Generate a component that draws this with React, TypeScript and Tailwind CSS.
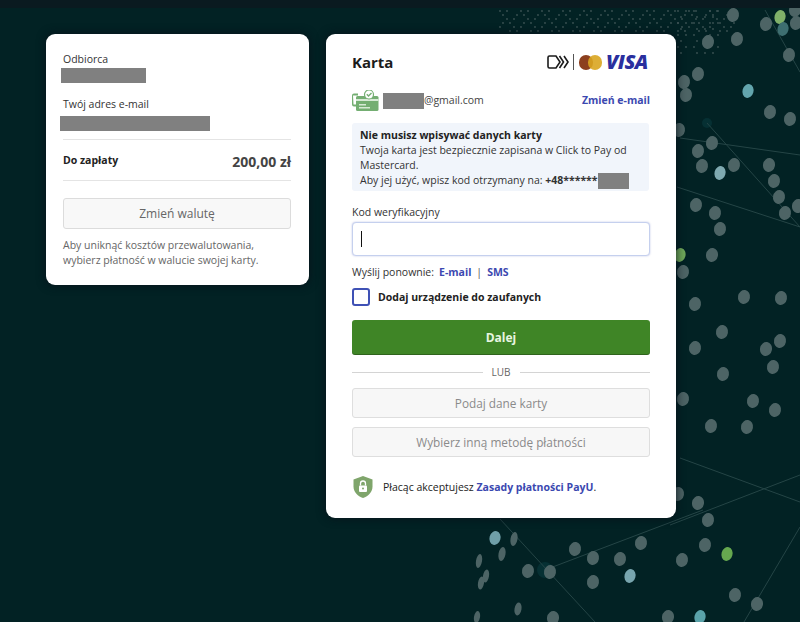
const greyDots: [number, number, number?, number?][] = [
  [733, 15], [708, 42], [737, 39], [766, 24], [795, 10], [796, 23], [789, 55], [698, 74], [684, 82], [686, 95],
  [770, 112], [790, 119], [712, 143], [698, 151], [702, 166], [734, 165], [769, 165], [774, 181], [779, 197],
  [785, 213], [798, 206], [696, 205], [715, 213], [720, 229], [712, 255], [683, 272], [744, 297], [781, 298],
  [695, 304], [679, 130], [722, 332], [695, 348], [766, 349], [780, 341], [773, 367], [723, 374], [683, 399],
  [753, 401], [775, 410], [711, 426], [747, 427], [698, 503], [708, 520], [705, 545], [682, 560], [735, 595],
  [757, 604], [678, 494], [641, 543], [620, 559], [593, 558], [575, 549], [593, 582], [668, 617], [550, 572],
  [528, 571], [553, 618], [514, 539, 3.5, 7], [502, 554, 3.5, 7], [479, 561, 3, 7], [486, 576, 3, 6.5],
  [481, 583, 3, 6.5], [518, 609, 3.5, 6.5], [477, 617, 3, 6],
];

const accentDots: [number, number, string][] = [
  [780, 17, "#7fb069"],
  [783, 29, "#3d6e70"],
  [748, 91, "#63a5ad"],
  [720, 173, "#7fa9b0"],
  [680, 255, "#6fa85a"],
  [727, 554, "#66a84f"],
  [700, 617, "#5aa3aa"],
  [630, 576, "#78a5ae"],
  [495, 538, "#6f9fa8"],
];

const lines = [
  [707, 123, 800, 227],
  [680, 138, 800, 155],
  [677, 187, 800, 227],
  [765, 10, 800, 72],
  [680, 458, 800, 502],
  [670, 525, 800, 475],
  [800, 527, 744, 622],
  [500, 519, 595, 622],
  [550, 568, 703, 510],
];

// little dots of the globe at the top
const smallDots: [number, number][] = [];
for (let row = 0; row < 6; row++) {
  for (let col = 0; col < 34; col++) {
    if ((row + col) % 3 === 2) continue;
    smallDots.push([500 + col * 7 + (row % 2) * 3, 11 + row * 4]);
  }
}
for (let row = 0; row < 8; row++) {
  for (let col = 0; col < 6; col++) {
    if ((row * 2 + col) % 4 === 3) continue;
    smallDots.push([678 + col * 8 + (row % 2) * 3, 11 + row * 6]);
  }
}

function Background() {
  return (
    <svg className="absolute inset-0" width="800" height="622" viewBox="0 0 800 622">
      <circle cx="707" cy="123" r="5" fill="#0f4a50" opacity="0.35" />
      <circle cx="545" cy="570" r="8" fill="#0f4a50" opacity="0.35" />
      {lines.map((l, i) => (
        <line key={i} x1={l[0]} y1={l[1]} x2={l[2]} y2={l[3]} stroke="#254546" strokeWidth="1" />
      ))}
      {smallDots.map((d, i) => (
        <circle key={i} cx={d[0]} cy={d[1]} r="0.9" fill="#3c5354" />
      ))}
      {greyDots.map((d, i) => (
        <ellipse
          key={i}
          cx={d[0]}
          cy={d[1]}
          rx={d[2] ?? 6}
          ry={d[3] ?? 7}
          fill="#4d6465"
          transform={`rotate(10 ${d[0]} ${d[1]})`}
        />
      ))}
      {accentDots.map((d, i) => (
        <ellipse key={i} cx={d[0]} cy={d[1]} rx="5.5" ry="7" fill={d[2]} transform={`rotate(15 ${d[0]} ${d[1]})`} />
      ))}
    </svg>
  );
}

function Redacted({ className }: { className: string }) {
  return <span className={`block bg-[#808080] ${className}`} />;
}

function ClickToPayIcon() {
  return (
    <svg width="23" height="14" viewBox="0 0 23 14" fill="none" stroke="#1b1b1b" strokeWidth="1.6">
      <path d="M9 1H2.500A1.500 1.500 0 0 0 1 2.500v9A1.500 1.500 0 0 0 2.500 13H9l4-6z" />
      <path d="M12.500 1l4 6-4 6M17 1l4 6-4 6" />
    </svg>
  );
}

function CardCheckIcon() {
  return (
    <svg width="27" height="21" viewBox="0 0 27 21">
      <path d="M1 5.500h5v-2H2a2 2 0 0 0-2 2v9a2 2 0 0 0 2 2h3v-2H1.500z" fill="#74ae72" />
      <rect x="4" y="6" width="22.500" height="15" rx="1.500" fill="#74ae72" />
      <rect x="4" y="9" width="22.500" height="2" fill="#d7ead6" />
      <rect x="7" y="14" width="7" height="1.500" fill="#d7ead6" />
      <rect x="7" y="17" width="11" height="1.500" fill="#d7ead6" />
      <circle cx="17" cy="4.500" r="4.500" fill="#fff" stroke="#74ae72" strokeWidth="1.200" />
      <path d="M14.800 4.300l1.700 1.700 3-3" fill="none" stroke="#74ae72" strokeWidth="1.400" />
    </svg>
  );
}

function ShieldIcon() {
  return (
    <svg width="20" height="22" viewBox="0 0 20 22">
      <path d="M10 0l9.500 3.500v7c0 5.500-4 9.500-9.500 11.500C4.500 20 .5 16 .5 10.500v-7z" fill="#7fa56b" />
      <rect x="6" y="9.500" width="8" height="6.500" rx="1" fill="#fff" />
      <path d="M7.500 9.500V7.500a2.500 2.500 0 0 1 5 0v2" fill="none" stroke="#fff" strokeWidth="1.300" />
      <circle cx="10" cy="12.500" r="1" fill="#7fa56b" />
    </svg>
  );
}

export default function App() {
  return (
    <div className="relative h-[622px] overflow-hidden bg-[#022224] font-['Open_Sans',sans-serif] text-[10.5px] text-[#333]">
      <Background />
      <div className="relative h-2 bg-[#0a1a20]" />

      <div className="relative flex items-start gap-[17px] pl-[46px] pt-[26px]">
        {/* Podsumowanie */}
        <div className="flex h-[251px] w-[263px] flex-col rounded-[9px] bg-white pr-[18px] pl-[17px] pt-[18px] shadow-[0_0_10px_rgba(8,16,24,0.9)]">
          <p className="leading-[15px]">Odbiorca</p>
          <Redacted className="-ml-0.5 mt-[1px] h-[15px] w-[85px]" />
          <p className="mt-[14px] leading-[15px]">Twój adres e-mail</p>
          <Redacted className="-ml-[3px] mt-[4px] h-[15px] w-[150px]" />

          <div className="mt-2 flex h-[42px] items-center justify-between border-y border-[#e4e4e4] pt-[2px]">
            <span className="font-bold text-[#222]">Do zapłaty</span>
            <span className="text-[14px] font-bold text-[#444]">200,00 zł</span>
          </div>

          <button className="mt-[17px] h-[31px] w-full rounded-[3px] border border-[#dcdcdc] bg-[#f8f8f8] text-[12px] text-[#666]">
            Zmień walutę
          </button>
          <p className="mt-[9px] leading-[15px] text-[#666]">
            Aby uniknąć kosztów przewalutowania,
            <br />
            wybierz płatność w walucie swojej karty.
          </p>
        </div>

        {/* Karta */}
        <div className="flex h-[484px] w-[350px] flex-col rounded-[9px] bg-white px-[26px] pt-[16px] shadow-[0_0_10px_rgba(8,16,24,0.9)]">
          <div className="flex h-6 items-center justify-between">
            <h1 className="text-[15px] font-bold text-[#1c1c1c]">Karta</h1>
            <div className="flex items-center">
              <ClickToPayIcon />
              <span className="ml-[3px] h-4 w-px bg-[#555]" />
              <span className="ml-[5px] h-[15px] w-[14px] rounded-full bg-[#8c3f1e]" />
              <span className="-ml-[5px] h-[15px] w-[14px] rounded-full bg-[#d9a520] opacity-90" />
              <span className="ml-1 w-[44px] text-[20px] leading-none font-extrabold tracking-[-0.5px] text-[#2a2f9e] italic">
                VISA
              </span>
            </div>
          </div>

          <div className="mt-[16px] flex h-[21px] items-center justify-between">
            <div className="flex items-center">
              <CardCheckIcon />
              <Redacted className="ml-[4px] h-4 w-[41px]" />
              <span className="text-[#444]">@gmail.com</span>
            </div>
            <a className="font-bold text-[#3b48b0]">Zmień e-mail</a>
          </div>

          <div className="mt-[12px] h-[68px] w-[297px] rounded-[3px] bg-[#f1f5fb] px-2 pt-[5px] leading-[15px]">
            <p className="font-bold text-[#222]">Nie musisz wpisywać danych karty</p>
            <p>Twoja karta jest bezpiecznie zapisana w Click to Pay od Mastercard.</p>
            <div className="flex">
              <span>Aby jej użyć, wpisz kod otrzymany na:&nbsp;</span>
              <span className="font-bold">+48******</span>
              <Redacted className="h-4 w-[31px]" />
            </div>
          </div>

          <label className="mt-[14px] leading-[15px]">Kod weryfikacyjny</label>
          <div className="mt-[2px] flex h-[34px] items-center rounded-[4px] border border-[#c5d0ee] bg-white pl-2 shadow-[0_0_2px_rgba(63,81,181,0.35)]">
            <span className="h-4 w-px bg-[#111]" />
          </div>

          <div className="mt-[9px] flex h-[16px] items-center">
            <span>Wyślij ponownie:</span>
            <a className="ml-[5px] font-bold text-[#3b48b0]">E-mail</a>
            <span className="mx-[5px] text-[#555]">|</span>
            <a className="font-bold text-[#3b48b0]">SMS</a>
          </div>

          <div className="mt-[7px] flex h-[18px] items-center">
            <span className="h-[18px] w-[18px] rounded-[3px] border-2 border-[#3f51b5] bg-white" />
            <span className="ml-2 pt-px font-bold text-[#222]">Dodaj urządzenie do zaufanych</span>
          </div>

          <button className="mt-[14px] h-[35px] w-full rounded-[3px] bg-[#3f8526] text-[12px] font-bold text-[#e8f5e0] shadow-[inset_0_-1px_0_rgba(0,0,0,0.25)]">
            Dalej
          </button>

          <div className="mt-[10px] flex h-[14px] items-center gap-[9px] text-[10px] text-[#666]">
            <span className="h-px flex-1 bg-[#d4d4d4]" />
            LUB
            <span className="h-px flex-1 bg-[#d4d4d4]" />
          </div>

          <button className="mt-[9px] h-[30px] w-full rounded-[3px] border border-[#dedede] bg-[#f7f7f7] pt-px text-[11.800px] text-[#8a8a8a]">
            Podaj dane karty
          </button>
          <button className="mt-[9px] h-[30px] w-full rounded-[3px] border border-[#dedede] bg-[#f7f7f7] pt-px text-[11.800px] text-[#8a8a8a]">
            Wybierz inną metodę płatności
          </button>

          <div className="mt-[19px] flex h-[22px] items-center pl-[1px]">
            <ShieldIcon />
            <p className="ml-[10px] pt-px text-[#222]">
              Płacąc akceptujesz <a className="font-bold text-[#3b48b0]">Zasady płatności PayU</a>.
            </p>
          </div>
        </div>
      </div>
    </div>
  );
}
